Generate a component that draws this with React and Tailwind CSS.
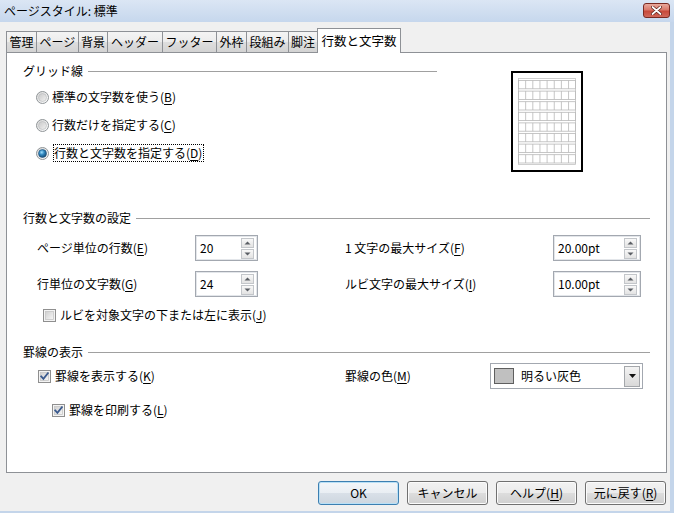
import React from "react";

function Radio({ checked }) {
  return (
    <svg width="13" height="13" viewBox="0 0 13 13" className="shrink-0">
      <defs>
        <linearGradient id="ro" x1="0" y1="0" x2="1" y2="1">
          <stop offset="0" stopColor="#d8d8d8" />
          <stop offset="1" stopColor="#ffffff" />
        </linearGradient>
        <linearGradient id="ri" x1="0" y1="0" x2="1" y2="1">
          <stop offset="0" stopColor="#c8c8c8" />
          <stop offset="1" stopColor="#f2f2f2" />
        </linearGradient>
        <radialGradient id="rs" cx="0.4" cy="0.35" r="0.7">
          <stop offset="0" stopColor="#9fe0ff" />
          <stop offset="0.45" stopColor="#2f86be" />
          <stop offset="1" stopColor="#14466e" />
        </radialGradient>
      </defs>
      <circle cx="6.5" cy="6.5" r="6" fill="url(#ro)" stroke="#8f9497" strokeWidth="1" />
      <circle cx="6.5" cy="6.5" r="4" fill={checked ? "url(#rs)" : "url(#ri)"} stroke={checked ? "#1d4f78" : "#b6b8ba"} strokeWidth="0.6" />
    </svg>
  );
}

function Check({ checked }) {
  return (
    <svg width="13" height="13" viewBox="0 0 13 13" className="shrink-0">
      <defs>
        <linearGradient id="cb" x1="0" y1="0" x2="1" y2="1">
          <stop offset="0" stopColor="#cfcfcf" />
          <stop offset="1" stopColor="#f7f7f7" />
        </linearGradient>
      </defs>
      <rect x="0.5" y="0.5" width="12" height="12" fill="#f4f4f4" stroke="#8f8f8f" />
      <rect x="2.5" y="2.5" width="8" height="8" fill="url(#cb)" stroke="#c6c6c6" strokeWidth="0.8" />
      {checked && (
        <path d="M3.2 6.4 L5.4 8.9 L9.9 3.2" fill="none" stroke="#3a5a8e" strokeWidth="1.8" strokeLinecap="square" />
      )}
    </svg>
  );
}

function SpinBtn({ up }) {
  return (
    <div className="flex h-[10px] w-[13px] items-center justify-center border border-[#c3c6ca] bg-[linear-gradient(to_bottom,#f8f8f8,#e3e3e3)]">
      <svg width="7" height="4" viewBox="0 0 7 4">
        {up ? <path d="M0.5 3.5 L3.5 0.5 L6.5 3.5 Z" fill="#5a5e64" /> : <path d="M0.5 0.5 L3.5 3.5 L6.5 0.5 Z" fill="#5a5e64" />}
      </svg>
    </div>
  );
}

function Spin({ value, className }) {
  return (
    <div className={"flex h-[26px] items-center border border-[#a3a8b0] bg-white shadow-[inset_0_0_0_1px_#e3e6ea] " + className}>
      <span className="flex-1 pl-[4px]">{value}</span>
      <div className="mr-[3px] flex flex-col gap-px">
        <SpinBtn up />
        <SpinBtn />
      </div>
    </div>
  );
}

function Header({ label, className }) {
  return (
    <div className={"flex h-[16px] items-center " + className}>
      <span className="whitespace-nowrap">{label}</span>
      <div className="ml-[5px] flex-1 border-t border-[#a0a0a0]" />
    </div>
  );
}

function U({ children }) {
  return <span className="underline underline-offset-2">{children}</span>;
}

function Tab({ label, w }) {
  return (
    <div className={"-ml-px flex h-[21px] items-center justify-center border border-b-0 border-[#8e9196] bg-[linear-gradient(to_bottom,#f4f4f4_0%,#ececec_50%,#dedede_50%,#d3d3d3_100%)] first:ml-0 " + w}>
      {label}
    </div>
  );
}

function Preview() {
  const rows = [];
  for (let i = 0; i < 8; i++) {
    const t = 2.5 + i * 10.6;
    rows.push(<rect key={"r" + i} x="0.5" y={t} width="57" height="8.3" fill="none" stroke="#b8b8b8" strokeWidth="0.8" />);
    for (let j = 1; j < 8; j++) {
      const x = 0.5 + j * 7.15;
      rows.push(<line key={"c" + i + "-" + j} x1={x} y1={t} x2={x} y2={t + 8.3} stroke="#b8b8b8" strokeWidth="0.8" />);
    }
  }
  return (
    <div className="flex h-[101px] w-[72px] items-start justify-start border-2 border-black bg-white pl-[5px] pt-[5px]">
      <svg width="58" height="87" viewBox="0 0 58 87">
        <rect x="0.5" y="0.5" width="57" height="86" fill="none" stroke="#c4c4c4" strokeWidth="0.8" />
        {rows}
      </svg>
    </div>
  );
}

function Button({ children, def }) {
  return (
    <div
      className={
        def
          ? "flex h-[24px] w-[81px] items-center justify-center rounded-[3px] border border-[#3c7fb1] bg-[linear-gradient(to_bottom,#f3f6f9_0%,#e9eef3_50%,#d9e0e8_50%,#cdd6df_100%)] shadow-[inset_0_0_0_1px_#b9e0f6]"
          : "flex h-[24px] w-[81px] items-center justify-center rounded-[3px] border border-[#707070] bg-[linear-gradient(to_bottom,#f2f2f2_0%,#ebebeb_50%,#dddddd_50%,#cfcfcf_100%)] shadow-[inset_0_0_0_1px_#fbfbfb]"
      }
    >
      {children}
    </div>
  );
}

export default function App() {
  return (
    <div className="flex h-[513px] w-[674px] flex-col overflow-hidden bg-[#f0f0f0] font-['Noto_Sans_CJK_JP','Noto_Sans',sans-serif] text-[12px] leading-[16px] text-black">
      {/* title bar */}
      <div className="flex h-[22px] shrink-0 items-center justify-between bg-[linear-gradient(to_bottom,#dbe6f4,#c6d7ed)] pl-[4px] pr-[4px]">
        <span>ページスタイル: 標準</span>
        <div className="mb-[2px] flex h-[15px] w-[27px] items-center justify-center rounded-[3px] border border-[#7a2a22] bg-[linear-gradient(to_bottom,#e9a99c_0%,#d9786a_45%,#c8493a_55%,#d0685a_100%)]">
          <svg width="11" height="9" viewBox="0 0 11 9">
            <path d="M1.5 1 L9.5 8 M9.5 1 L1.5 8" stroke="#5b2019" strokeWidth="3.2" strokeLinecap="round" />
            <path d="M1.5 1 L9.5 8 M9.5 1 L1.5 8" stroke="#ffffff" strokeWidth="1.7" strokeLinecap="round" />
          </svg>
        </div>
      </div>

      <div className="flex flex-1">
        <div className="flex flex-1 flex-col pt-[6px]">
          {/* tabs */}
          <div className="relative z-10 flex h-[24px] items-end pl-[6px]">
            <Tab label="管理" w="w-[31px]" />
            <Tab label="ページ" w="w-[43px]" />
            <Tab label="背景" w="w-[30px]" />
            <Tab label="ヘッダー" w="w-[56px]" />
            <Tab label="フッター" w="w-[55px]" />
            <Tab label="外枠" w="w-[31px]" />
            <Tab label="段組み" w="w-[43px]" />
            <Tab label="脚注" w="w-[30px]" />
            <div className="-mb-px -ml-px flex h-[25px] w-[84px] items-start justify-center border border-b-0 border-[#8e9196] bg-white pt-[4px] text-[12.5px]">
              行数と文字数
            </div>
          </div>

          {/* panel */}
          <div className="ml-[6px] flex h-[421px] w-[661px] flex-col border border-[#8e9196] bg-white">
            <div className="flex items-start">
              <div className="ml-[16px] mt-[10px] flex w-[414px] flex-col">
                <Header label="グリッド線" />
                <div className="mt-[8px] flex flex-col gap-[8px]">
                  <div className="flex h-[20px] items-center pl-[13px]">
                    <Radio />
                    <span className="ml-[3px]">標準の文字数を使う(<U>B</U>)</span>
                  </div>
                  <div className="flex h-[20px] items-center pl-[13px]">
                    <Radio />
                    <span className="ml-[3px]">行数だけを指定する(<U>C</U>)</span>
                  </div>
                  <div className="flex h-[20px] items-center pl-[13px]">
                    <Radio checked />
                    <span className="ml-[4px] border border-dotted border-black pr-[1px] leading-[16px]">
                      行数と文字数を指定する(<U>D</U>)
                    </span>
                  </div>
                </div>
              </div>
              <div className="ml-[74px] mt-[18px]">
                <Preview />
              </div>
            </div>

            <Header label="行数と文字数の設定" className="ml-[16px] mt-[38px] w-[627px]" />

            <div className="mt-[9px] flex h-[26px] items-center pl-[30px]">
              <span className="w-[158px]">ページ単位の行数(<U>E</U>)</span>
              <Spin value="20" className="w-[63px]" />
              <span className="ml-[87px] w-[208px]">1 文字の最大サイズ(<U>F</U>)</span>
              <Spin value="20.00pt" className="w-[88px]" />
            </div>
            <div className="mt-[10px] flex h-[26px] items-center pl-[30px]">
              <span className="w-[158px]">行単位の文字数(<U>G</U>)</span>
              <Spin value="24" className="w-[63px]" />
              <span className="ml-[87px] w-[208px]">ルビ文字の最大サイズ(<U>I</U>)</span>
              <Spin value="10.00pt" className="w-[88px]" />
            </div>
            <div className="mt-[10px] flex h-[16px] items-center pl-[36px]">
              <Check />
              <span className="ml-[4px]">ルビを対象文字の下または左に表示(<U>J</U>)</span>
            </div>

            <Header label="罫線の表示" className="ml-[16px] mt-[21px] w-[627px]" />

            <div className="mt-[3px] flex h-[26px] items-center pl-[31px]">
              <div className="flex w-[307px] items-center">
                <Check checked />
                <span className="ml-[4px]">罫線を表示する(<U>K</U>)</span>
              </div>
              <span className="w-[145px]">罫線の色(<U>M</U>)</span>
              <div className="flex h-[26px] w-[153px] items-center border border-[#a3a8b0] bg-white pl-[3px] pr-[2px]">
                <div className="h-[16px] w-[20px] border border-[#5f5f5f] bg-[#c0c0c0]" />
                <span className="ml-[7px] flex-1">明るい灰色</span>
                <div className="flex h-[21px] w-[16px] items-center justify-center border border-[#a4a7ab] bg-[linear-gradient(to_bottom,#f3f3f3,#d9d9d9)]">
                  <svg width="7" height="4" viewBox="0 0 7 4">
                    <path d="M0 0 L7 0 L3.5 4 Z" fill="#111111" />
                  </svg>
                </div>
              </div>
            </div>
            <div className="mt-[13px] flex h-[16px] items-center pl-[45px]">
              <Check checked />
              <span className="ml-[4px]">罫線を印刷する(<U>L</U>)</span>
            </div>
          </div>

          {/* buttons */}
          <div className="mt-[8px] flex justify-end gap-[8px] pr-[4px]">
            <Button def>OK</Button>
            <Button>キャンセル</Button>
            <Button>ヘルプ(<U>H</U>)</Button>
            <Button>元に戻す(<U>R</U>)</Button>
          </div>
        </div>
        <div className="w-[4px] bg-[#c4d5ea]" />
      </div>
      <div className="h-[2px] shrink-0 bg-[#c4d5ea]" />
    </div>
  );
}
